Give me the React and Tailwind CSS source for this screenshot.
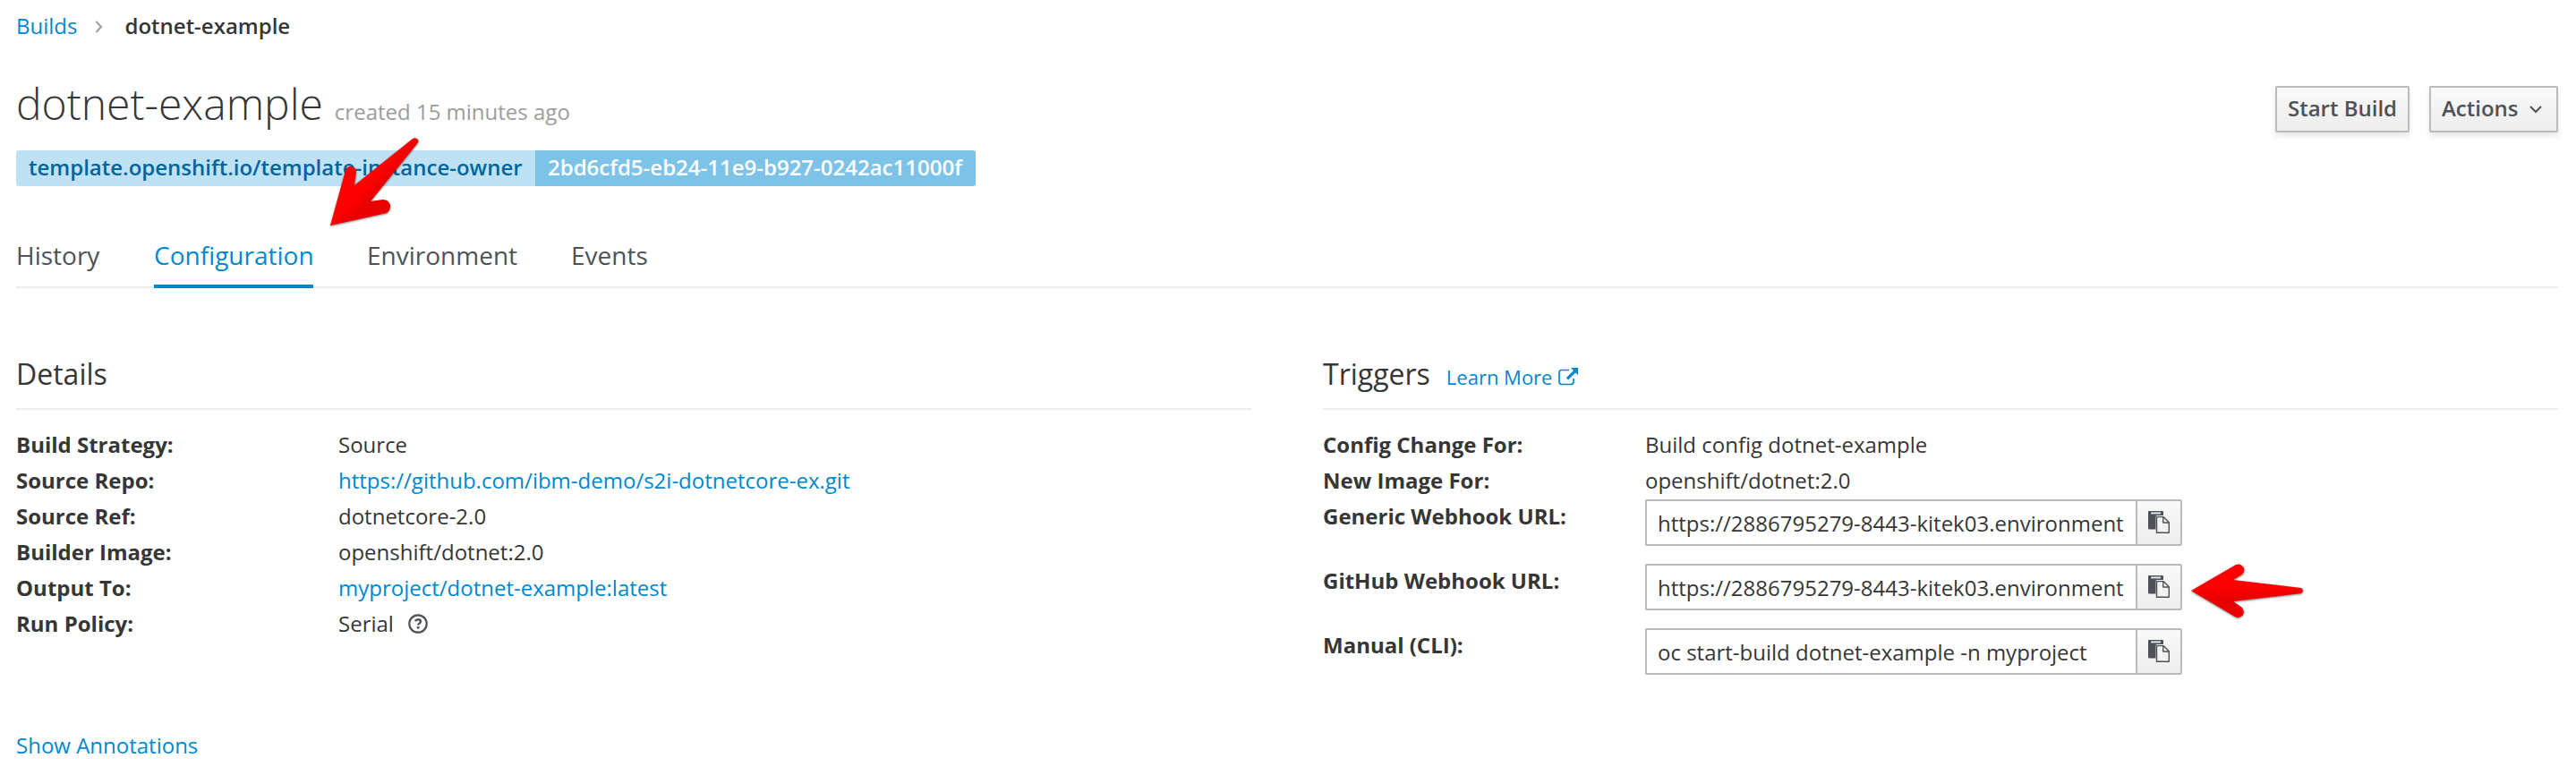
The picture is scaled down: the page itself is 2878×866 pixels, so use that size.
import React from "react";

const link = "text-[#0088ce]";

function Row({ label, children, className = "h-[40px]" }) {
  return (
    <div className={`flex ${className}`}>
      <dt className="w-[360px] shrink-0 font-bold leading-[38px]">{label}</dt>
      <dd className="flex items-start leading-[38px]">{children}</dd>
    </div>
  );
}

function PasteIcon() {
  return (
    <svg viewBox="0 0 24 25" className="mb-px h-[25px] w-[24px]">
      <path d="M1 0H16Q17 0 17 1V5H10Q8.500 5 8.500 6.500V20.500H1Q0 20.500 0 19.500V1Q0 0 1 0Z" fill="#4d5258" />
      <path d="M3.200 1.400H14V3.400H3.200Z" fill="#e4e4e4" />
      <path d="M9.500 6.600H17L23.300 12.800V24.200H9.500ZM16.800 6.900V13H23" fill="#f2f2f2" stroke="#4d5258" strokeWidth="1.400" strokeLinejoin="round" />
    </svg>
  );
}

function CopyField({ value }) {
  return (
    <div className="flex h-[52px] w-[600px]">
      <div className="flex w-[548px] items-center overflow-hidden whitespace-nowrap rounded-l-[2px] border-2 border-r-0 border-[#bbb] pl-[12px] pt-[2px] leading-[40px]">
        <span className="block w-[524px] overflow-hidden">{value}</span>
      </div>
      <button className="flex w-[52px] items-center justify-center rounded-r-[2px] border-2 border-[#bbb] bg-linear-to-b from-[#fafafa] to-[#ededed]">
        <PasteIcon />
      </button>
    </div>
  );
}

export default function App() {
  return (
    <div className="relative h-[866px] w-[2878px] overflow-hidden bg-white pl-[18px] pr-[20px] font-['Open_Sans',sans-serif] text-[24px] text-[#363636]">
      <nav className="flex h-[60px] items-center pb-[2px] leading-[40px]">
        <a className={link}>Builds</a>
        <svg viewBox="0 0 10 14" className="ml-[20px] mr-[23px] mt-[2px] h-[14px] w-[10px]">
          <path d="M1.500 1L7 7L1.500 13" fill="none" stroke="#9c9c9c" strokeWidth="2" />
        </svg>
        <strong className="font-semibold">dotnet-example</strong>
      </nav>
      <header className="flex h-[108px] items-start justify-between pt-[36px]">
        <h1 className="-mt-[7px] flex items-baseline gap-[13px]">
          <span className="text-[48px] font-light leading-[54px]">dotnet-example</span>
          <small className="text-[24px] text-[#9c9c9c]">created 15 minutes ago</small>
        </h1>
        <div className="flex gap-[22px] font-semibold text-[#4d5258]">
          <button className="flex h-[52px] w-[150px] items-center justify-center rounded-[2px] border-2 border-[#bbb] bg-linear-to-b from-[#fafafa] to-[#ededed] pb-[2px] shadow-[0_4px_6px_rgba(3,3,3,0.1)]">Start Build</button>
          <button className="flex h-[52px] w-[144px] items-center rounded-[2px] border-2 border-[#bbb] bg-linear-to-b from-[#fafafa] to-[#ededed] pb-[2px] pl-[12px] shadow-[0_4px_6px_rgba(3,3,3,0.1)]">
            Actions
            <svg viewBox="0 0 14 9" className="ml-[12px] mt-[2px] h-[9px] w-[14px]">
              <path d="M1 1L7 7L13 1" fill="none" stroke="#4d5258" strokeWidth="2" />
            </svg>
          </button>
        </div>
      </header>
      <div className="flex h-[40px] font-semibold leading-[38px]">
        <span className="w-[580px] rounded-l-[3px] bg-[#bee1f4] pl-[14px] text-[#00659c]">template.openshift.io/template-instance-owner</span>
        <span className="w-[492px] rounded-r-[3px] bg-[#7dc3e8] pl-[14px] text-white">2bd6cfd5-eb24-11e9-b927-0242ac11000f</span>
      </div>
      <ul className="mt-[46px] flex h-[68px] gap-[60px] whitespace-nowrap border-b-2 border-[#ededed] text-[28px] leading-[62px] text-[#4d5258]">
        <li className="w-[94px]">History</li>
        <li className="h-[68px] w-[178px] border-b-4 border-[#0088ce] text-[#0088ce]">Configuration</li>
        <li className="w-[168px]">Environment</li>
        <li>Events</li>
      </ul>
      <div className="mt-[70px] grid grid-cols-2 gap-x-[80px]">
        <section>
          <h3 className="h-[66px] border-b-2 border-[#ededed] text-[32px] leading-[52px]">Details</h3>
          <dl className="pt-[20px]">
            <Row label="Build Strategy:">Source</Row>
            <Row label="Source Repo:"><a className={link}>https://github.com/ibm-demo/s2i-dotnetcore-ex.git</a></Row>
            <Row label="Source Ref:">dotnetcore-2.0</Row>
            <Row label="Builder Image:">openshift/dotnet:2.0</Row>
            <Row label="Output To:"><a className={link}>myproject/dotnet-example:latest</a></Row>
            <Row label="Run Policy:">
              Serial
              <svg viewBox="0 0 22 22" className="ml-[16px] mt-[8px] size-[22px]">
                <circle cx="11" cy="11" r="9.700" fill="none" stroke="#4d5258" strokeWidth="2.200" />
                <path d="M7.800 8.200Q9 6.200 11.200 6.200Q14 6.200 14 8.500Q14 9.800 12.400 10.700Q11.200 11.400 11.200 12.600" fill="none" stroke="#4d5258" strokeWidth="2.400" />
                <rect x="9.900" y="14" width="2.600" height="2.600" fill="#4d5258" />
              </svg>
            </Row>
          </dl>
        </section>
        <section>
          <div className="flex h-[66px] items-baseline border-b-2 border-[#ededed]">
            <h3 className="text-[32px] leading-[52px]">Triggers</h3>
            <a className={`ml-[18px] flex text-[22px] ${link}`}>
              Learn More
              <svg viewBox="0 0 22 20" className="ml-[7px] mt-[6px] h-[20px] w-[22px]">
                <path d="M12 2.500H4Q1 2.500 1 5.500V15.500Q1 18.500 4 18.500H14Q17 18.500 17 15.500V12" fill="none" stroke="#0088ce" strokeWidth="1.700" />
                <path d="M14 0H22V8L19.200 5.400L11 13.500L8.800 11.300L17 3Z" fill="#0088ce" />
              </svg>
            </a>
          </div>
          <dl className="pt-[20px]">
            <Row label="Config Change For:">Build config dotnet-example</Row>
            <Row label="New Image For:">openshift/dotnet:2.0</Row>
            <Row className="h-[72px]" label="Generic Webhook URL:"><CopyField value="https://2886795279-8443-kitek03.environment" /></Row>
            <Row className="h-[72px]" label="GitHub Webhook URL:"><CopyField value="https://2886795279-8443-kitek03.environment" /></Row>
            <Row className="h-[72px]" label="Manual (CLI):"><CopyField value="oc start-build dotnet-example -n myproject" /></Row>
          </dl>
        </section>
      </div>
      <a className={`mt-[40px] block leading-[38px] ${link}`}>Show Annotations</a>
      <svg viewBox="0 0 100 102" className="absolute left-[368px] top-[152px] h-[102px] w-[100px] drop-shadow-[0_1px_1px_rgba(0,0,0,0.5)]">
        <defs>
          <linearGradient id="arrow-a" gradientUnits="userSpaceOnUse" x1="24" y1="45" x2="62" y2="80">
            <stop offset="0.350" stopColor="#ff0000" />
            <stop offset="0.650" stopColor="#e80000" />
          </linearGradient>
        </defs>
        <path d="M1 100L18 38.500Q20 33 25 34Q30 35 30 40L28 55L93 3Q96 1 99 4Q100 6 98.500 8L46 73L60 71Q66 71 68 77Q68.500 83 64 86Z" fill="url(#arrow-a)" />
      </svg>
      <svg viewBox="0 0 128 62" className="absolute left-[2448px] top-[630px] h-[62px] w-[128px] drop-shadow-[0_1px_1px_rgba(0,0,0,0.5)]">
        <defs>
          <linearGradient id="arrow-b" x1="0" y1="0" x2="0" y2="1">
            <stop offset="0.400" stopColor="#ff0000" />
            <stop offset="0.650" stopColor="#e80000" />
          </linearGradient>
        </defs>
        <path d="M0 30L50 1Q56-1 59 5Q60 9 57 12L47 18L123 27Q127 30 123 33L47 42L57 49Q60 53 58 57Q54 62 49 59Z" fill="url(#arrow-b)" />
      </svg>
    </div>
  );
}
